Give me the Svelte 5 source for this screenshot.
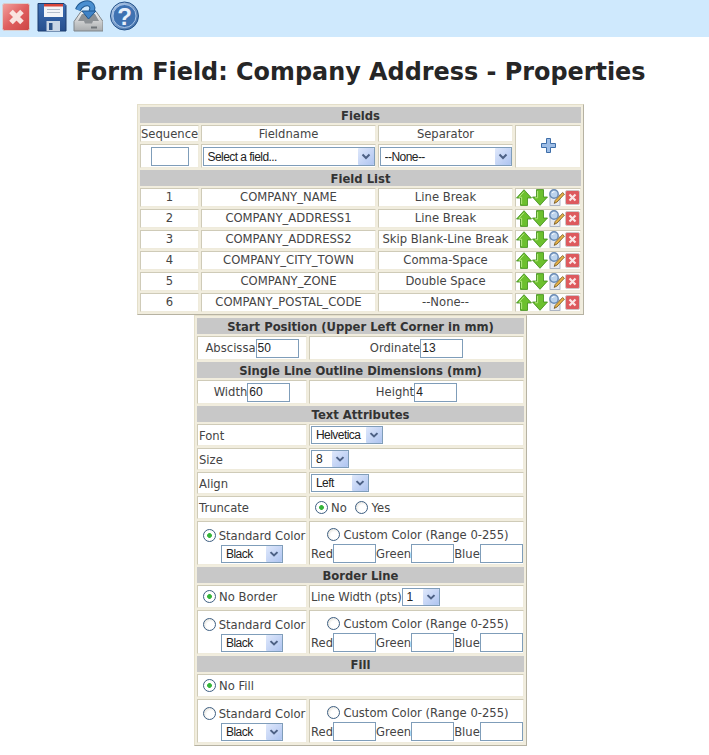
<script lang="ts">
  const fields = [
    { seq: 1, name: 'COMPANY_NAME', sep: 'Line Break' },
    { seq: 2, name: 'COMPANY_ADDRESS1', sep: 'Line Break' },
    { seq: 3, name: 'COMPANY_ADDRESS2', sep: 'Skip Blank-Line Break' },
    { seq: 4, name: 'COMPANY_CITY_TOWN', sep: 'Comma-Space' },
    { seq: 5, name: 'COMPANY_ZONE', sep: 'Double Space' },
    { seq: 6, name: 'COMPANY_POSTAL_CODE', sep: '--None--' }
  ]
</script>

{#snippet dropdown(label: string, width: number)}
  <span class="dd" style="width: {width}px">
    <select><option>{label}</option></select>
    <svg class="arrow" viewBox="0 0 16 17" width="16" height="17" preserveAspectRatio="none">
      <defs>
        <linearGradient id="arr" x1="0" y1="0" x2="1" y2="1">
          <stop offset="0" stop-color="#dfe8fb" />
          <stop offset="1" stop-color="#aec4f0" />
        </linearGradient>
      </defs>
      <rect width="16" height="17" rx="1" fill="url(#arr)" />
      <path d="M4.5 6.5 8 10l3.5-3.5" fill="none" stroke="#4d6185" stroke-width="2" />
    </svg>
  </span>
{/snippet}

{#snippet colorRow(std: boolean)}
  <tr class="color">
    <td class="c">
      <label class="stdc"><input type="radio" checked={std} />Standard Color</label>
      <div class="stdsel">{@render dropdown('Black', 62)}</div>
    </td>
    <td class="c">
      <label class="cust"><input type="radio" />Custom Color (Range 0-255)</label>
      <div class="rgb">
        Red<input class="tb w43" type="text" />Green<input class="tb w43" type="text" />Blue<input class="tb w43" type="text" />
      </div>
    </td>
  </tr>
{/snippet}

{#snippet upIcon()}
  <svg viewBox="0 0 16 17" width="16" height="17">
    <path d="M8 .7 15.5 9H11.5V16.4H4.5V9H.5Z" fill="#6cc02e" stroke="#3d8a17" stroke-width=".8" />
    <path d="M8 2.7 3 8.2H5.6V15" fill="none" stroke="#b4e77f" stroke-width="1" />
  </svg>
{/snippet}

{#snippet downIcon()}
  <svg viewBox="0 0 16 17" width="16" height="17">
    <path d="M8 16.3 15.5 8H11.5V.6H4.5V8H.5Z" fill="#6cc02e" stroke="#3d8a17" stroke-width=".8" />
    <path d="M5.6 2V8.8H3" fill="none" stroke="#b4e77f" stroke-width="1" />
  </svg>
{/snippet}

{#snippet editIcon()}
  <svg viewBox="0 0 17 17" width="17" height="17">
    <rect x="2" y="6" width="10" height="10.4" fill="#e6e9f0" stroke="#9aa4b6" stroke-width=".8" />
    <circle cx="6" cy="5" r="4.2" fill="#bcd3ec" stroke="#6a8bb4" stroke-width="1.4" />
    <path d="M4.2 4a2 2 0 0 1 2.4-1.2" fill="none" stroke="#fff" stroke-width="1" />
    <path d="M14.6 3.5 16.4 5.2 9 13 6.2 14.4 7.2 11.4Z" fill="#e9b54a" stroke="#6e5118" stroke-width=".8" />
  </svg>
{/snippet}

{#snippet delIcon()}
  <svg class="del" viewBox="0 0 15 15" width="15" height="15">
    <rect x=".5" y=".5" width="14" height="14" rx="1.5" fill="#dd5a5e" stroke="#cfc6c6" />
    <path d="M4.5 4.5l6 6m0-6-6 6" stroke="#fbe6e6" stroke-width="2.2" />
  </svg>
{/snippet}

<div class="page">
  <div class="toolbar">
    <svg class="tool" viewBox="0 0 30 32" width="30" height="32">
      <defs>
        <linearGradient id="redbox" x1="0" y1="0" x2="1" y2="1">
          <stop offset="0" stop-color="#f2a3a0" />
          <stop offset=".5" stop-color="#df5f5f" />
          <stop offset="1" stop-color="#cc4444" />
        </linearGradient>
        <linearGradient id="disk" x1="0" y1="0" x2="0" y2="1">
          <stop offset="0" stop-color="#3d6fb4" />
          <stop offset="1" stop-color="#264f8e" />
        </linearGradient>
        <linearGradient id="helpbg" x1="0" y1="0" x2="1" y2="1">
          <stop offset="0" stop-color="#c4d8f0" />
          <stop offset="1" stop-color="#2f619f" />
        </linearGradient>
        <linearGradient id="tray" x1="0" y1="0" x2="0" y2="1">
          <stop offset="0" stop-color="#f2f2f2" />
          <stop offset="1" stop-color="#a9acae" />
        </linearGradient>
      </defs>
      <rect x="1.5" y="3.5" width="27" height="27" rx="2" fill="url(#redbox)" stroke="#d9cfcf" />
      <path d="M10 11.5 21 22.5M21 11.5 10 22.5" stroke="#f9e4e0" stroke-width="5" />
    </svg>
    <svg class="tool" viewBox="0 0 30 32" width="30" height="32">
      <path d="M1 3.5h26l2 2v25.5H1Z" fill="url(#disk)" stroke="#1d3c6e" />
      <rect x="7" y="4" width="19" height="13" fill="#f3f5f8" />
      <rect x="7" y="4" width="19" height="2.5" fill="#d8453a" />
      <path d="M10 9.5h13M10 12.5h13" stroke="#b5bfcc" />
      <rect x="9.5" y="21" width="13.5" height="10" fill="#c9d6e6" />
      <rect x="12" y="23" width="3.5" height="7" fill="#2c5288" />
    </svg>
    <svg class="tool" viewBox="0 0 30 32" width="30" height="32">
      <path d="M8 11.5H23L30 21.5V31H1V21.5Z" fill="url(#tray)" stroke="#7f8589" />
      <path d="M9 14H22L26 21H20L19 23.5H12L11 21H5Z" fill="#8b9094" />
      <path d="M18 27.5h6" stroke="#6f7478" stroke-width="2" />
      <path d="M5 10C7 4 14 2 17 4C20 6 20 9 18 12" fill="none" stroke="#1f578f" stroke-width="6" />
      <path d="M5 10C7 4 14 2 17 4C20 6 20 9 18 12" fill="none" stroke="#4a8fd0" stroke-width="4" />
      <path d="M9 11H23L15.5 19Z" fill="#3f83c7" stroke="#1f578f" />
    </svg>
    <svg class="tool" viewBox="0 0 30 32" width="30" height="32">
      <circle cx="15.5" cy="16" r="14" fill="url(#helpbg)" stroke="#23528c" />
      <circle cx="15.5" cy="16" r="11.5" fill="#3f72b2" stroke="#a8c4e8" />
      <text x="15.5" y="25" text-anchor="middle" class="q">?</text>
    </svg>
  </div>

  <h1>Form Field: Company Address - Properties</h1>

  <table class="grid fieldtbl">
    <colgroup><col style="width: 59px" /><col style="width: 175px" /><col style="width: 135px" /><col /></colgroup>
    <tbody>
      <tr class="hd"><th colspan="4">Fields</th></tr>
      <tr class="caps">
        <td>Sequence</td>
        <td>Fieldname</td>
        <td>Separator</td>
        <td rowspan="2" class="plus">
          <svg viewBox="0 0 15 15" width="15" height="15">
            <path d="M5.5.5h4v5h5v4h-5v5h-4v-5h-5v-4h5Z" fill="#9dbde6" stroke="#3f6ea8" />
          </svg>
        </td>
      </tr>
      <tr class="inputs">
        <td><input class="tb seq" type="text" /></td>
        <td>{@render dropdown('Select a field...', 172)}</td>
        <td>{@render dropdown('--None--', 132)}</td>
      </tr>
      <tr class="hd"><th colspan="4">Field List</th></tr>
      {#each fields as f}
        <tr class="frow">
          <td>{f.seq}</td>
          <td>{f.name}</td>
          <td>{f.sep}</td>
          <td class="acts">{@render upIcon()}{@render downIcon()}{@render editIcon()}{@render delIcon()}</td>
        </tr>
      {/each}
    </tbody>
  </table>

  <table class="grid proptbl">
    <colgroup><col style="width: 110px" /><col /></colgroup>
    <tbody>
      <tr class="hd"><th colspan="2">Start Position (Upper Left Corner in mm)</th></tr>
      <tr class="mid">
        <td>Abscissa<input class="tb w43" type="text" value="50" /></td>
        <td>Ordinate<input class="tb w43" type="text" value="13" /></td>
      </tr>
      <tr class="hd"><th colspan="2">Single Line Outline Dimensions (mm)</th></tr>
      <tr class="mid">
        <td>Width<input class="tb w43" type="text" value="60" /></td>
        <td>Height<input class="tb w43" type="text" value="4" /></td>
      </tr>
      <tr class="hd"><th colspan="2">Text Attributes</th></tr>
      <tr class="r22"><td>Font</td><td>{@render dropdown('Helvetica', 72)}</td></tr>
      <tr class="r22"><td>Size</td><td>{@render dropdown('8', 38)}</td></tr>
      <tr class="r22"><td>Align</td><td>{@render dropdown('Left', 58)}</td></tr>
      <tr class="r23">
        <td>Truncate</td>
        <td class="radios">
          <label><input type="radio" checked />No</label>
          <label><input type="radio" />Yes</label>
        </td>
      </tr>
      {@render colorRow(true)}
      <tr class="hd"><th colspan="2">Border Line</th></tr>
      <tr class="r23">
        <td class="solo"><label><input type="radio" checked />No Border</label></td>
        <td class="lw">Line Width (pts){@render dropdown('1', 38)}</td>
      </tr>
      {@render colorRow(false)}
      <tr class="hd"><th colspan="2">Fill</th></tr>
      <tr class="r23"><td colspan="2" class="solo"><label><input type="radio" checked />No Fill</label></td></tr>
      {@render colorRow(false)}
    </tbody>
  </table>
</div>

<style>
  :global(body) {
    margin: 0;
    background: #fff;
    overflow-x: hidden;
    font-family: 'DejaVu Sans', Verdana, sans-serif;
    font-size: 11.6px;
    color: #333;
  }
  .page { width: 721px; }
  .toolbar {
    display: flex;
    align-items: flex-start;
    height: 37px;
    padding-left: 1px;
    gap: 6px;
    background: #cfe9fd;
    box-sizing: border-box;
  }
  .tool { display: block; flex: none; }
  .q {
    font: bold 24px 'Liberation Sans', sans-serif;
    fill: #e8f0fb;
  }
  h1 {
    margin: 0;
    height: 67px;
    text-align: center;
    font: bold 23.9px/70px 'DejaVu Sans', Verdana, sans-serif;
    color: #262626;
  }
  .grid {
    margin: 0 auto;
    table-layout: fixed;
    border-collapse: separate;
    border-spacing: 2px;
    background: #f1edde;
    border: 1px solid #e4dfca;
    border-right-color: #b6b2a2;
    border-bottom-color: #b6b2a2;
    color: #444;
  }
  .fieldtbl { width: 447px; }
  .proptbl { width: 333px; }
  td, th { padding: 0; box-sizing: border-box; }
  td {
    background: #fff;
    border: 1px solid #cfcbb8;
    border-right-color: #efebdc;
    border-bottom-color: #efebdc;
    font-size: 11.6px;
    line-height: 14px;
    white-space: nowrap;
  }
  th {
    height: 16px;
    padding-top: 2px;
    line-height: 14px;
    background: #c8c8c8;
    text-align: center;
    font-size: 11.6px;
    font-weight: bold;
    color: #333;
  }
  .caps td { height: 17px; text-align: center; }
  .inputs td { height: 24px; text-align: center; padding-top: 1px; }
  .frow td { height: 19px; text-align: center; padding-bottom: 2px; }
  .plus { text-align: center; padding-bottom: 3px; }
  .plus svg { display: block; margin: 0 auto; }
  .frow .acts { padding-bottom: 0; font-size: 0; line-height: 0; text-align: left; }
  .acts svg { vertical-align: top; }
  .acts .del { margin-top: 1px; }
  .mid td { height: 24px; text-align: center; }
  .r22 td { height: 22px; padding-left: 1px; }
  .r22 td:first-child { padding-top: 2px; }
  .r23 td { height: 23px; padding-left: 1px; }
  .r23 td.solo { padding-left: 2px; }
  .r23 td.radios { padding-left: 5px; }
  .radios input[type='radio'] { margin-left: 0; }
  .radios label { margin-right: 5px; }
  .lw { letter-spacing: -0.1px; }
  .color td { height: 44px; vertical-align: top; }
  .stdc { display: block; padding-top: 7px; padding-left: 1px; text-align: center; white-space: nowrap; }
  .stdsel { text-align: center; margin-top: 2px; line-height: 0; }
  .cust { display: block; text-align: center; padding-top: 6px; }
  .rgb { padding-top: 2px; padding-left: 1px; display: flex; align-items: center; }
  .tb {
    box-sizing: border-box;
    height: 19px;
    border: 1px solid #7f9db9;
    padding: 0 1px;
    margin: 0;
    font: 12px 'Liberation Sans', sans-serif;
    color: #222;
    background: #fff;
    vertical-align: middle;
    outline: none;
  }
  .seq { width: 38px; }
  .w43 { width: 43px; }
  input[type='radio'] {
    appearance: none;
    box-sizing: border-box;
    width: 13px;
    height: 13px;
    margin: 0 3px 0 3px;
    border: 1px solid #3e5f82;
    border-radius: 50%;
    background: radial-gradient(circle at 60% 60%, #fff 40%, #d6d3c8 100%);
    vertical-align: -2px;
  }
  input[type='radio']:checked {
    background: radial-gradient(circle, #35b53a 0 2px, #fff 2.8px);
  }
  .dd {
    position: relative;
    display: inline-block;
    height: 19px;
    vertical-align: middle;
    box-sizing: border-box;
  }
  select {
    appearance: none;
    display: block;
    box-sizing: border-box;
    width: 100%;
    height: 19px;
    margin: 0;
    padding: 0 0 0 4px;
    border: 1px solid #7f9db9;
    border-radius: 0;
    background: #fff;
    font: 12px 'Liberation Sans', sans-serif;
    letter-spacing: -0.55px;
    color: #222;
  }
  .arrow {
    position: absolute;
    top: 1px;
    right: 1px;
    pointer-events: none;
  }
  .proptbl .dd, .proptbl select { height: 18px; }
  .proptbl .arrow { height: 16px; }
</style>
